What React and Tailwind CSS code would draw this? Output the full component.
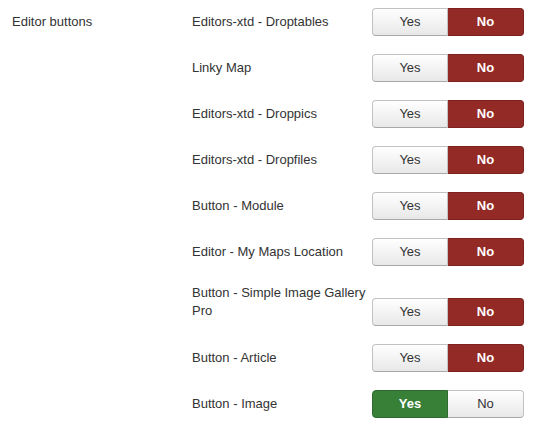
const rows = [
  { label: "Editors-xtd - Droptables", value: false },
  { label: "Linky Map", value: false },
  { label: "Editors-xtd - Droppics", value: false },
  { label: "Editors-xtd - Dropfiles", value: false },
  { label: "Button - Module", value: false },
  { label: "Editor - My Maps Location", value: false },
  { label: "Button - Simple Image Gallery Pro", value: false, tall: true },
  { label: "Button - Article", value: false },
  { label: "Button - Image", value: true },
];

const Toggle = ({ value, className = "" }) => (
  <div className={`flex h-[28px] w-[152px] text-[13px] ${className}`}>
    <div
      className={`flex w-[76px] items-center justify-center rounded-l-[4px] border ${
        value
          ? "border-[#2f6b2f] bg-[#388038] text-white font-bold"
          : "border-[#c2c2c2] border-b-[#a8a8a8] bg-gradient-to-b from-white to-[#e8e8e8] text-[#333]"
      }`}
    >
      Yes
    </div>
    <div
      className={`flex w-[76px] items-center justify-center rounded-r-[4px] border border-l-0 ${
        value
          ? "border-[#c2c2c2] border-b-[#a8a8a8] bg-gradient-to-b from-white to-[#e8e8e8] text-[#333]"
          : "border-[#7d231f] bg-[#942a25] text-white font-bold"
      }`}
    >
      No
    </div>
  </div>
);

export default function App() {
  return (
    <div className="h-[439px] w-[550px] bg-white font-['Liberation_Sans',Arial,sans-serif] text-[13px] leading-[18px] text-[#333]">
      <div className="flex pt-[8px]">
        <div className="w-[192px] shrink-0 pl-[12px] pt-[5px]">Editor buttons</div>
        <div className="flex flex-col gap-[18px]">
          {rows.map((row) => (
            <div key={row.label} className="flex items-start">
              <div className={`w-[180px] shrink-0 ${row.tall ? "" : "pt-[5px]"}`}>
                {row.label}
              </div>
              <Toggle value={row.value} className={row.tall ? "mt-[14px]" : ""} />
            </div>
          ))}
        </div>
      </div>
    </div>
  );
}
